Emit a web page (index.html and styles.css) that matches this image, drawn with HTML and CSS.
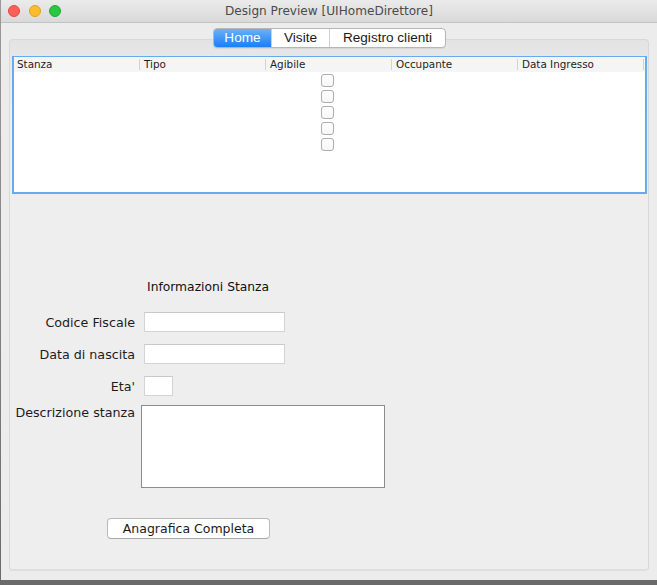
FILE: index.html
```html
<!DOCTYPE html>
<html>
<head>
<meta charset="utf-8">
<link rel="stylesheet" href="styles.css">
</head>
<body>
<div class="window">
  <div class="titlebar">
    <div class="lights">
      <span class="light red"></span>
      <span class="light yellow"></span>
      <span class="light green"></span>
    </div>
    <div class="title">Design Preview [UIHomeDirettore]</div>
    <div></div>
  </div>
  <div class="content">
    <div class="tabbar">
      <div class="tab active w58">Home</div>
      <div class="tab w58">Visite</div>
      <div class="tab w116">Registro clienti</div>
    </div>
    <div class="panel">
      <div class="table">
        <div class="thead">
          <div class="th">Stanza</div>
          <div class="th">Tipo</div>
          <div class="th">Agibile</div>
          <div class="th">Occupante</div>
          <div class="th">Data Ingresso</div>
        </div>
        <div class="tbody">
          <div class="tr"><div class="td"></div><div class="td"></div><div class="td check"><span class="cb"></span></div><div class="td"></div><div class="td"></div></div>
          <div class="tr"><div class="td"></div><div class="td"></div><div class="td check"><span class="cb"></span></div><div class="td"></div><div class="td"></div></div>
          <div class="tr"><div class="td"></div><div class="td"></div><div class="td check"><span class="cb"></span></div><div class="td"></div><div class="td"></div></div>
          <div class="tr"><div class="td"></div><div class="td"></div><div class="td check"><span class="cb"></span></div><div class="td"></div><div class="td"></div></div>
          <div class="tr"><div class="td"></div><div class="td"></div><div class="td check"><span class="cb"></span></div><div class="td"></div><div class="td"></div></div>
        </div>
      </div>

      <div class="section-title">Informazioni Stanza</div>

      <div class="row r1">
        <div class="label">Codice Fiscale</div>
        <div class="field wide"></div>
      </div>
      <div class="row r2">
        <div class="label">Data di nascita</div>
        <div class="field wide"></div>
      </div>
      <div class="row r2">
        <div class="label">Eta'</div>
        <div class="field small"></div>
      </div>
      <div class="row r4">
        <div class="label">Descrizione stanza</div>
        <div class="textarea"></div>
      </div>

      <div class="btn">Anagrafica Completa</div>
    </div>
  </div>
</div>
</body>
</html>
```

FILE: styles.css
```css
html, body {
  margin: 0;
  padding: 0;
}
body {
  width: 657px;
  height: 585px;
  background: linear-gradient(#9a9a9a, #6a6a6a);
  overflow: hidden;
  font-family: "DejaVu Sans", sans-serif;
  color: #1c1c1c;
}
.window {
  margin-left: 1px;
  width: 656px;
  height: 580px;
  background: #ececec;
  display: flex;
  flex-direction: column;
}
.titlebar {
  height: 22px;
  border-bottom: 1px solid #c2c2c2;
  background: linear-gradient(#ebebeb, #d9d9d9);
  display: grid;
  grid-template-columns: 1fr auto 1fr;
  align-items: center;
}
.lights {
  display: flex;
  gap: 8.5px;
  padding-left: 7px;
}
.light {
  width: 12px;
  height: 12px;
  border-radius: 50%;
  box-sizing: border-box;
}
.red { background: #fc5f57; border: 1px solid #df4a43; }
.yellow { background: #fdbc2e; border: 1px solid #dea124; }
.green { background: #29c840; border: 1px solid #1eaa33; }
.title {
  font-size: 12.1px;
  color: #4a4a4a;
  line-height: 22px;
}
.content {
  flex: 1;
  display: flex;
  flex-direction: column;
}
.tabbar {
  margin-top: 5px;
  align-self: flex-start;
  margin-left: 212px;
  display: flex;
  height: 20px;
  box-sizing: border-box;
  border: 1px solid #b6b6b6;
  border-radius: 4px;
  background: #fff;
  overflow: hidden;
  position: relative;
  z-index: 1;
  box-shadow: 0 1px 0 rgba(0,0,0,0.06);
  font-family: "Liberation Sans", Arial, sans-serif;
  font-size: 13.6px;
}
.tab {
  text-align: center;
  line-height: 18px;
  color: #1a1a1a;
  border-left: 1px solid #cfcfcf;
  box-sizing: border-box;
}
.tab:first-child { border-left: none; }
.tab.active {
  background: linear-gradient(#69b1fa, #1a7ff6);
  color: #fff;
}
.w58 { width: 58px; }
.tab.active.w58 { width: 57px; }
.w116 { width: 116px; }
.panel {
  margin-top: -9px;
  margin-left: 8px;
  width: 640px;
  height: 532px;
  box-sizing: border-box;
  border: 1px solid #d8d8d8;
  border-bottom: 2px solid #dedede;
  border-radius: 4px;
  background: linear-gradient(#e3e3e3 0, #e7e7e7 17px, #eeeeee 70px);
  display: flex;
  flex-direction: column;
  align-items: flex-start;
}
.table {
  margin-top: 16px;
  margin-left: 2px;
  width: 635px;
  height: 138px;
  box-sizing: border-box;
  border: 2px solid #64abf1;
  border-top-width: 1px;
  background: #fff;
}
.thead {
  display: grid;
  grid-template-columns: repeat(5, 126px);
  height: 15px;
  background: #f5f5f5;
}
.th {
  font-size: 10.4px;
  line-height: 15px;
  padding-left: 4px;
  color: #1e1e1e;
  background: linear-gradient(#d2d2d2, #d2d2d2) right center / 1px 11px no-repeat;
}
.th:first-child { padding-left: 3px; }
.tbody {
  display: flex;
  flex-direction: column;
}
.tr {
  display: grid;
  grid-template-columns: repeat(5, 126px);
  height: 16px;
}
.td.check {
  display: flex;
  align-items: center;
  justify-content: center;
  padding-right: 4px;
}
.cb {
  width: 13px;
  height: 13px;
  box-sizing: border-box;
  border: 1px solid #adadad;
  border-radius: 3px;
  background: linear-gradient(#ffffff, #f6f6f6);
}
.section-title {
  margin-top: 86px;
  margin-left: 137px;
  font-size: 12.3px;
  line-height: 15px;
  color: #111;
}
.row {
  display: flex;
  align-items: center;
}
.r1 { margin-top: 17px; }
.r2 { margin-top: 12px; }
.r4 { margin-top: 9px; align-items: flex-start; }
.label {
  width: 125px;
  text-align: right;
  font-size: 12.7px;
  line-height: 15px;
  margin-right: 9px;
  white-space: nowrap;
  color: #1c1c1c;
}
.field {
  height: 20px;
  box-sizing: border-box;
  border: 1px solid #d3d3d3;
  border-top-color: #c9c9c9;
  background: #fff;
}
.wide { width: 141px; }
.small { width: 29px; }
.textarea {
  margin-left: -3px;
  width: 244px;
  height: 83px;
  box-sizing: border-box;
  border: 1px solid #8c8c8c;
  background: #fff;
}
.btn {
  margin-top: 30px;
  margin-left: 97px;
  width: 163px;
  height: 21px;
  box-sizing: border-box;
  border: 1px solid #bababa;
  border-bottom-color: #a9a9a9;
  border-radius: 4px;
  background: #fff;
  text-align: center;
  font-size: 12.5px;
  line-height: 19px;
  color: #1a1a1a;
}
```
